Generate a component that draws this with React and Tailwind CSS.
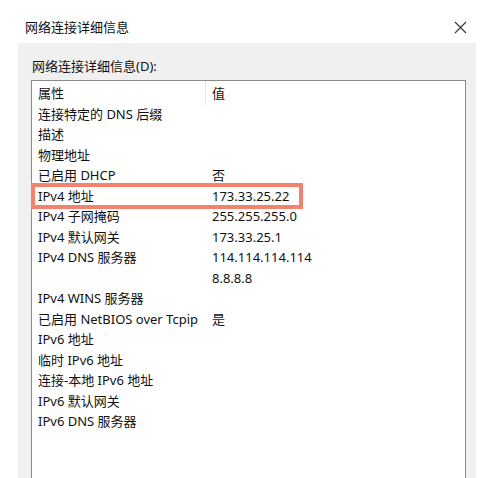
import React from "react";

const rows = [
  ["连接特定的 DNS 后缀", ""],
  ["描述", ""],
  ["物理地址", ""],
  ["已启用 DHCP", "否"],
  ["IPv4 地址", "173.33.25.22"],
  ["IPv4 子网掩码", "255.255.255.0"],
  ["IPv4 默认网关", "173.33.25.1"],
  ["IPv4 DNS 服务器", "114.114.114.114"],
  ["", "8.8.8.8"],
  ["IPv4 WINS 服务器", ""],
  ["已启用 NetBIOS over Tcpip", "是"],
  ["IPv6 地址", ""],
  ["临时 IPv6 地址", ""],
  ["连接-本地 IPv6 地址", ""],
  ["IPv6 默认网关", ""],
  ["IPv6 DNS 服务器", ""],
];

export default function App() {
  return (
    <div
      className="w-[500px] h-[478px] overflow-hidden bg-white text-[#111] flex flex-col"
      style={{ fontFamily: '"Noto Sans", "Noto Sans CJK SC", sans-serif' }}
    >
      <div className="h-[43px] shrink-0 flex items-center justify-between pl-[25px] pr-[33px] pt-[11px]">
        <span className="text-[13px] leading-none">网络连接详细信息</span>
        <svg width="13" height="13" viewBox="0 0 13 13">
          <path d="M1 1 L12 12 M12 1 L1 12" stroke="#333" strokeWidth="1.1" fill="none" />
        </svg>
      </div>
      <div className="flex-1 flex">
        <div className="ml-[18px] w-[458px] bg-[#f0f0f0] pl-[13px] pr-[10px] pt-[14px] flex flex-col">
          <div className="text-[13px] leading-[18px] pl-[1px]">网络连接详细信息(D):</div>
          <div className="relative mt-[5px] flex-1 bg-white border border-[#8a8a8a] border-b-0 pt-[2px]">
            <div className="absolute left-[173px] top-0 h-[24px] w-px bg-[#e5e5e5]" />
            <div className="flex text-[13px] leading-[20.5px]">
              <div className="w-[173px] pl-[6px]">属性</div>
              <div className="pl-[7px]">值</div>
            </div>
            {rows.map(([k, v], i) => (
              <div key={i} className="flex text-[13px] leading-[20.5px] whitespace-nowrap">
                <div className="w-[173px] pl-[6px]">{k || "\u00a0"}</div>
                <div className="pl-[7px]">{v}</div>
              </div>
            ))}
            <div className="absolute left-[-1px] top-[102px] w-[272px] h-[26px] border-[4px] border-[#f3836f]" />
          </div>
        </div>
      </div>
    </div>
  );
}
